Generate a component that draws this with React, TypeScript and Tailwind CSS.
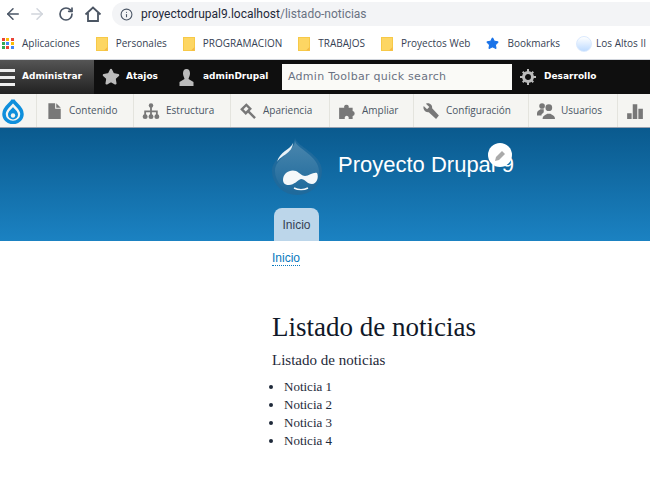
import React from 'react';
import { ArrowLeft, ArrowRight, RotateCw, Info, Star } from 'lucide-react';

const sans = { fontFamily: '"Open Sans", sans-serif' };

const Folder = () => (
  <svg width="12" height="14" viewBox="0 0 12 14" className="shrink-0">
    <rect x="0.5" y="0.5" width="11" height="13" fill="#fdd663" stroke="#f7c948" />
    <path d="M8 13.500 L11.500 13.500 L11.500 10 Z" fill="#f5b942" />
  </svg>
);

const AppsGrid = () => {
  const colors = ['#ea4335', '#fbbc05', '#ea4335', '#34a853', '#4285f4', '#fbbc05', '#34a853', '#ea4335', '#4285f4'];
  return (
    <div className="grid grid-cols-3 gap-px w-3 h-3 shrink-0">
      {colors.map((c, i) => (
        <span key={i} className="block w-[3px] h-[3px]" style={{ backgroundColor: c }} />
      ))}
    </div>
  );
};

const Bookmark = ({ icon, label }: { icon: React.ReactNode; label: string }) => (
  <div className="flex items-center gap-2 shrink-0">
    {icon}
    <span className="text-[10px] text-gray-700 whitespace-nowrap">{label}</span>
  </div>
);

const trayIcons: Record<string, React.ReactNode> = {
  doc: (
    <>
      <path d="M3 1h6v5h5v9H3z" />
      <path d="M10 1l4 4h-4z" />
    </>
  ),
  tree: (
    <>
      <circle cx="8" cy="3" r="2" />
      <path d="M7.200 4h1.600v3.500H14V12h-1.600V9H8.800v3H7.200V9H3.600v3H2V7.500h5.200z" />
      <circle cx="2.800" cy="13" r="2.200" />
      <circle cx="8" cy="13" r="2.200" />
      <circle cx="13.200" cy="13" r="2.200" />
    </>
  ),
  hammer: (
    <path fillRule="evenodd" d="M1 6.500L6.500 1l5 5-2 2 5.500 5.500-1.500 1.500L8 9.500l-2 2zM4 6.500l2 2 2.500-2.500-2-2z" />
  ),
  puzzle: (
    <path d="M1 5h4.500V3.500a2.300 2.300 0 014 0V5H13v3a2.300 2.300 0 010 4.500V15H9.500v-1.500a1.800 1.800 0 00-3.500 0V15H1z" />
  ),
  wrench: (
    <path d="M1.500 3.500l3 3 2-2-3-3C6.500 0 9.500 2.500 9 5.500l6 6.500-2.500 3L6 9c-3 .5-5.500-2.500-4.500-5.500z" />
  ),
  users: (
    <>
      <circle cx="10.500" cy="5" r="3" />
      <path d="M5 15c0-3 3-3.500 4-4.500h3c1 1 4 1.500 4 4.500z" />
      <circle cx="4.500" cy="3.500" r="2.500" />
      <path d="M0 10c0-2 2-2.500 3-3.500h3v2.500L4 11v1H0z" />
    </>
  ),
  chart: <path d="M1 10h4v5H1zM6 2h4v13H6zM11 6h4v9h-4z" />,
};

const TrayItem = ({ icon, label, w }: { icon: string; label: string; w: string }) => (
  <div className={`flex items-center gap-1.5 pl-2 border-r border-[#e4e4de] h-full shrink-0 ${w}`}>
    <svg width="18" height="18" viewBox="0 0 16 16" fill="#787878" className="shrink-0">{trayIcons[icon]}</svg>
    <span className="text-[10px] text-gray-600 whitespace-nowrap">{label}</span>
  </div>
);

export default function App() {
  return (
    <div className="w-[650px] h-[483px] overflow-hidden bg-white" style={sans}>
      <div className="h-7 flex items-center pl-1 bg-white">
        <ArrowLeft size={18} className="text-gray-600 shrink-0" />
        <ArrowRight size={18} className="text-gray-300 ml-1.5 shrink-0" />
        <RotateCw size={16} strokeWidth={2.5} className="text-gray-600 ml-3 shrink-0" />
        <svg width="18" height="18" viewBox="0 0 18 18" fill="none" stroke="#4b5563" strokeWidth="1.800" className="ml-2.5 shrink-0">
          <path d="M1.500 9.500L9 2.500l7.500 7" />
          <path d="M4 8v8h10V8" />
        </svg>
        <div className="flex-1 h-6 ml-2.5 -mr-1 bg-gray-100 rounded-l-full flex items-center gap-2 pl-2">
          <Info size={13} className="text-gray-600" />
          <span className="text-xs text-gray-800" style={{ fontFamily: 'Roboto, sans-serif' }}>
            proyectodrupal9.localhost<span className="text-gray-500">/listado-noticias</span>
          </span>
        </div>
      </div>
      <div className="h-8 flex items-center gap-4 pl-0.5 border-b border-gray-300 overflow-hidden">
        <Bookmark icon={<AppsGrid />} label="Aplicaciones" />
        <Bookmark icon={<Folder />} label="Personales" />
        <Bookmark icon={<Folder />} label="PROGRAMACION" />
        <Bookmark icon={<Folder />} label="TRABAJOS" />
        <Bookmark icon={<Folder />} label="Proyectos Web" />
        <Bookmark icon={<Star size={13} fill="#1a73e8" stroke="#1a73e8" />} label="Bookmarks" />
        <Bookmark
          icon={<div className="w-4 h-4 -mr-1 rounded-full bg-gradient-to-b from-white to-blue-200 border border-blue-100 shrink-0" />}
          label="Los Altos II"
        />
      </div>

      <div className="h-[34px] bg-[#0f0f0f] flex items-center text-white" style={{ fontFamily: '"DejaVu Sans", sans-serif' }}>
        <div className="w-[94px] h-full flex items-center gap-1.5 bg-gradient-to-b from-[#555] to-[#222]">
          <svg width="16" height="17" viewBox="0 0 16 17" fill="#eee" className="shrink-0">
            <rect y="0" width="15" height="3" />
            <rect y="7" width="15" height="3" />
            <rect y="14" width="15" height="3" />
          </svg>
          <span className="text-[9px] font-bold">Administrar</span>
        </div>
        <div className="flex items-center gap-1.5 pl-2 w-[84px]">
          <Star size={18} fill="#bbb" stroke="#bbb" className="shrink-0" />
          <span className="text-[9px] font-bold">Atajos</span>
        </div>
        <div className="flex items-center gap-2 w-[104px]">
          <svg width="17" height="17" viewBox="0 0 16 17" className="shrink-0">
            <path d="M8 0c2.500 0 3.500 2 3.500 4.500S10 9 10 10l5 3v4H1v-4l5-3c0-1-1.500-3-1.500-5.500S5.500 0 8 0z" fill="#bbb" />
          </svg>
          <span className="text-[9px] font-bold">adminDrupal</span>
        </div>
        <div className="w-[230px] h-[26px] bg-[#fafaf7] flex items-center pl-1.5 text-[11px] tracking-wide text-gray-500 shrink-0">
          Admin Toolbar quick search
        </div>
        <div className="flex items-center gap-2 pl-2">
          <svg width="16" height="16" viewBox="0 0 16 16" className="shrink-0">
            <circle cx="8" cy="8" r="4.500" fill="none" stroke="#bbb" strokeWidth="3" />
            <path d="M7 0h2v3H7zM7 13h2v3H7zM0 7h3v2H0zM13 7h3v2h-3zM2 3.400L3.400 2l2 2L4 5.400zM10.600 12L12 10.600l2 2-1.400 1.400zM12.600 2L14 3.400l-2 2L10.600 4zM4 10.600L5.400 12l-2 2L2 12.600z" fill="#bbb" />
          </svg>
          <span className="text-[9px] font-bold">Desarrollo</span>
        </div>
      </div>

      <div className="h-[34px] bg-[#f5f5f2] flex items-center border-b border-gray-400 overflow-hidden">
        <div className="w-[37px] h-full flex items-center pl-0.5 border-r border-[#e4e4de] shrink-0">
          <svg width="22" height="26" viewBox="0 0 22 26">
            <path d="M11 2c1 4 9 7 9 14a9 8.500 0 01-18 0C2 9 10 6 11 2z" fill="none" stroke="#0f8fdc" strokeWidth="3.500" />
            <path d="M11 9c1 2 5 4 5 7.500a5 5 0 01-10 0C6 13 10 11 11 9z" fill="#0f8fdc" />
            <circle cx="11" cy="17.500" r="2.200" fill="#f5f5f2" />
          </svg>
        </div>
        <TrayItem icon="doc" label="Contenido" w="w-[97px]" />
        <TrayItem icon="tree" label="Estructura" w="w-[97px]" />
        <TrayItem icon="hammer" label="Apariencia" w="w-[99px]" />
        <TrayItem icon="puzzle" label="Ampliar" w="w-[84px]" />
        <TrayItem icon="wrench" label="Configuración" w="w-[115px]" />
        <TrayItem icon="users" label="Usuarios" w="w-[89px]" />
        <TrayItem icon="chart" label="" w="w-[40px]" />
      </div>

      <header className="relative h-[113px] bg-gradient-to-b from-[#0a5a8e] to-[#1b82c2] pl-[272px]" style={{ fontFamily: '"Liberation Sans", sans-serif' }}>
        <div className="flex items-start gap-4 pt-2.5">
          <svg width="50" height="58" viewBox="0 0 50 58" className="shrink-0">
            <defs>
              <linearGradient id="drop" x1="0" y1="0" x2="0" y2="1">
                <stop offset="0" stopColor="#4a86ad" />
                <stop offset="1" stopColor="#1f6a9c" />
              </linearGradient>
            </defs>
            <path d="M23 0C24 8 50 16 50 33A25 24 0 010 33C0 18 22 12 23 0z" fill="#1f6a9c" />
            <path d="M23 3C24 10 47 18 47 33A22 21 0 013 33C3 20 22 14 23 3z" fill="url(#drop)" />
            <path d="M21 5C18 12 8 13 5 24C9 17 20 16 21 5z" fill="#eaf2f7" />
            <path d="M11 42C11 35 18 31 24 33C28 35 30 38 33 38C37 38 41 34 45 35C47 39 45 46 40 46C35 46 33 41 29 41C26 42 22 47 17 47C13 47 11 45 11 42z" fill="#f5f8fa" />
            <path d="M22 50C26 52 32 52 36 50" fill="none" stroke="#f5f8fa" strokeWidth="1.500" />
          </svg>
          <h2 className="text-[22px] text-white pt-2.5 whitespace-nowrap">Proyecto Drupal 9</h2>
        </div>
        <div className="absolute left-[488px] top-[15px] w-6 h-6 rounded-full bg-white flex items-center justify-center">
          <svg width="13" height="13" viewBox="0 0 13 13">
            <path d="M1 12l1-4 6-6 3 3-6 6z" fill="#aaa" />
          </svg>
        </div>
        <div className="absolute left-[274px] bottom-0 w-[45px] h-[33px] bg-[#bcd6ea] rounded-t-lg flex items-center justify-center text-xs text-gray-700">
          Inicio
        </div>
      </header>

      <main className="pl-[272px]">
        <div className="pt-1 h-[68px]" style={{ fontFamily: '"Liberation Sans", sans-serif' }}>
          <span className="text-xs text-[#0678be] border-b border-dotted border-[#0678be]">Inicio</span>
        </div>
        <div className="text-gray-800" style={{ fontFamily: '"Liberation Serif", serif' }}>
          <h1 className="text-[27px] leading-9 text-gray-900 mb-1">Listado de noticias</h1>
          <p className="text-[15px] mb-1.5">Listado de noticias</p>
          <ul className="list-disc pl-3 text-[13px] leading-[18px]">
            <li>Noticia 1</li>
            <li>Noticia 2</li>
            <li>Noticia 3</li>
            <li>Noticia 4</li>
          </ul>
        </div>
      </main>
    </div>
  );
}
